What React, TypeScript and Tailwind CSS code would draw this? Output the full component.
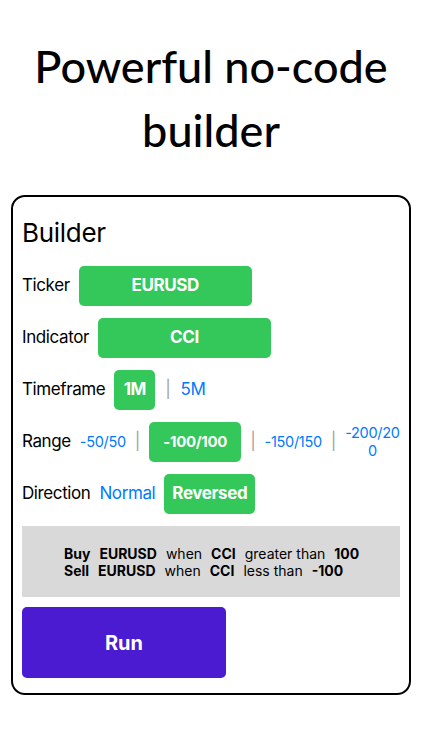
const GREEN = "bg-[#34c759]";

function Sep() {
  return <span className="text-[17px] text-[#a3a3a3]">|</span>;
}

function Pill({ children, className }: { children: React.ReactNode; className: string }) {
  return (
    <div
      className={`flex h-[40px] items-center justify-center rounded-[5px] ${GREEN} font-bold text-white ${className}`}
    >
      {children}
    </div>
  );
}

export default function App() {
  return (
    <main className="min-h-[750px] bg-white font-['Inter','Liberation_Sans',sans-serif] text-black">
      <h1 className="pt-[34px] text-center font-['Lato','Liberation_Sans',sans-serif] text-[45px] leading-[64px] font-medium">
        Powerful no-code
        <br />
        builder
      </h1>

      <section className="mx-[11px] mt-[33px] rounded-[14px] border-2 border-black px-[9px] pt-[20px] pb-[15px]">
        <h2 className="mb-[17px] text-[26px] leading-[32px] tracking-[-0.3px]">Builder</h2>

        <div className="flex flex-col gap-[12px] text-[17px] tracking-[-0.4px]">
          <div className="flex h-[40px] items-center gap-[9px]">
            <span>Ticker</span>
            <Pill className="w-[173px] text-[17px]">EURUSD</Pill>
          </div>

          <div className="flex h-[40px] items-center gap-[9px]">
            <span>Indicator</span>
            <Pill className="w-[173px] text-[17px]">CCI</Pill>
          </div>

          <div className="flex h-[40px] items-center gap-[10px]">
            <span className="mr-[-1px]">Timeframe</span>
            <Pill className="w-[41px] text-[17px]">1M</Pill>
            <Sep />
            <span className="text-[#007aff]">5M</span>
          </div>

          <div className="flex h-[40px] items-center gap-[9px] text-[14.5px] tracking-[-0.3px]">
            <span className="text-[17px] tracking-[-0.4px]">Range</span>
            <span className="text-[#007aff]">-50/50</span>
            <Sep />
            <Pill className="w-[92px] text-[15px]">-100/100</Pill>
            <Sep />
            <span className="text-[#007aff]">-150/150</span>
            <Sep />
            <div className="flex flex-col items-center leading-[18px] text-[#007aff]">
              <span>-200/20</span>
              <span>0</span>
            </div>
          </div>

          <div className="flex h-[40px] items-center gap-[9px]">
            <span>Direction</span>
            <span className="text-[#007aff]">Normal</span>
            <Pill className="w-[91px] text-[17px]">Reversed</Pill>
          </div>
        </div>

        <div className="mt-[12px] flex h-[71px] flex-col justify-center bg-[#d9d9d9] pl-[42px] text-[14px] leading-[17px]">
          <div className="flex gap-[9px]">
            <b>Buy</b>
            <b>EURUSD</b>
            <span>when</span>
            <b>CCI</b>
            <span>greater than</span>
            <b>100</b>
          </div>
          <div className="flex gap-[9px]">
            <b>Sell</b>
            <b>EURUSD</b>
            <span>when</span>
            <b>CCI</b>
            <span>less than</span>
            <b>-100</b>
          </div>
        </div>

        <button className="mt-[10px] flex h-[71px] w-[204px] items-center justify-center rounded-[5px] bg-[#4a1bd0] text-[20px] font-bold text-white">
          Run
        </button>
      </section>
    </main>
  );
}
